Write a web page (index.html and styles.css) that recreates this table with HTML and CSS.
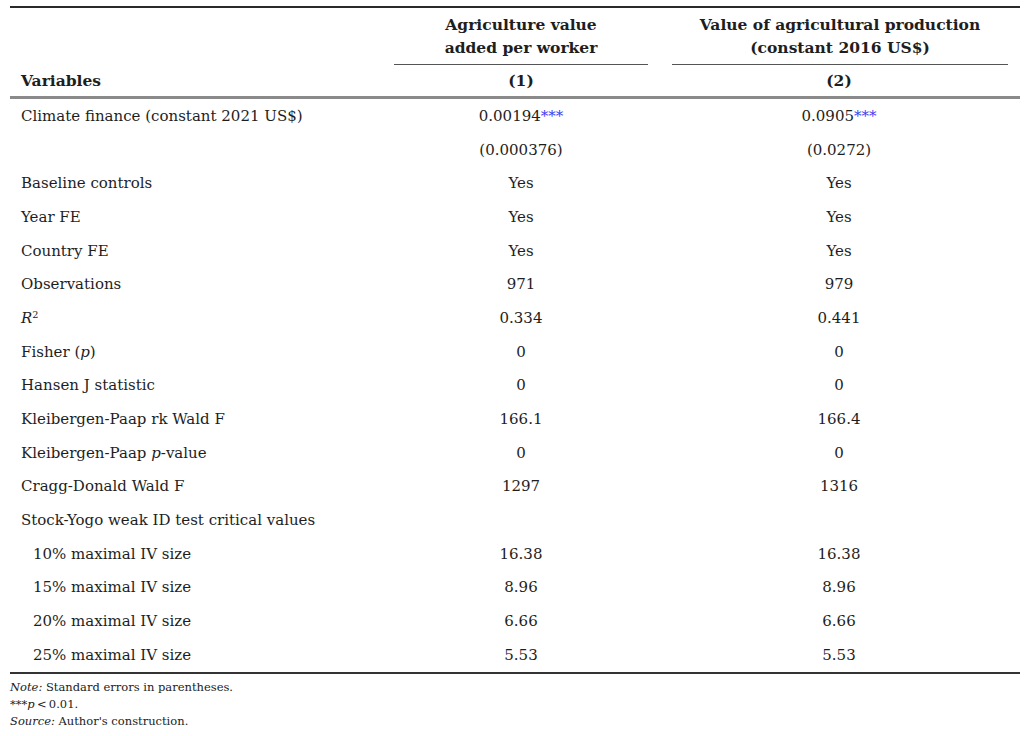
FILE: index.html
```html
<!DOCTYPE html>
<html>
<head>
<meta charset="utf-8">
<link rel="stylesheet" href="styles.css">
</head>
<body>
<div class="page">
<table class="reg">
  <colgroup><col class="c0"><col class="c1"><col class="c2"></colgroup>
  <thead>
    <tr class="h1">
      <th></th>
      <th><div class="hd hd1">Agriculture value<br>added per worker</div></th>
      <th><div class="hd hd2">Value of agricultural production<br>(constant 2016 US$)</div></th>
    </tr>
    <tr class="h2">
      <th class="lab">Variables</th>
      <th>(1)</th>
      <th>(2)</th>
    </tr>
  </thead>
  <tbody>
    <tr><td class="lab">Climate finance (constant 2021 US$)</td><td>0.00194<span class="st">***</span></td><td>0.0905<span class="st">***</span></td></tr>
    <tr><td class="lab"></td><td>(0.000376)</td><td>(0.0272)</td></tr>
    <tr><td class="lab">Baseline controls</td><td>Yes</td><td>Yes</td></tr>
    <tr><td class="lab">Year FE</td><td>Yes</td><td>Yes</td></tr>
    <tr><td class="lab">Country FE</td><td>Yes</td><td>Yes</td></tr>
    <tr><td class="lab">Observations</td><td>971</td><td>979</td></tr>
    <tr><td class="lab"><i>R</i><sup>2</sup></td><td>0.334</td><td>0.441</td></tr>
    <tr><td class="lab">Fisher (<i>p</i>)</td><td>0</td><td>0</td></tr>
    <tr><td class="lab">Hansen J statistic</td><td>0</td><td>0</td></tr>
    <tr><td class="lab">Kleibergen-Paap rk Wald F</td><td>166.1</td><td>166.4</td></tr>
    <tr><td class="lab">Kleibergen-Paap <i>p</i>-value</td><td>0</td><td>0</td></tr>
    <tr><td class="lab">Cragg-Donald Wald F</td><td>1297</td><td>1316</td></tr>
    <tr><td class="lab">Stock-Yogo weak ID test critical values</td><td></td><td></td></tr>
    <tr><td class="lab ind">10% maximal IV size</td><td>16.38</td><td>16.38</td></tr>
    <tr><td class="lab ind">15% maximal IV size</td><td>8.96</td><td>8.96</td></tr>
    <tr><td class="lab ind">20% maximal IV size</td><td>6.66</td><td>6.66</td></tr>
    <tr class="last"><td class="lab ind">25% maximal IV size</td><td>5.53</td><td>5.53</td></tr>
  </tbody>
</table>
<div class="notes">
  <p><i>Note:</i> Standard errors in parentheses.</p>
  <p>***<i>p</i>&thinsp;&lt;&thinsp;0.01.</p>
  <p><i>Source:</i> Author's construction.</p>
</div>
</div>
</body>
</html>
```
FILE: styles.css
```css
html, body {
  margin: 0;
  padding: 0;
  background: #ffffff;
}
.page {
  padding: 6px 6px 0 10px;
  font-family: "DejaVu Serif", "Liberation Serif", serif;
  color: #1e1e1e;
}
.reg {
  border-collapse: collapse;
  width: 1010px;
  table-layout: fixed;
  font-size: 15px;
}
.c0 { width: 374px; }
.c1 { width: 274px; }
.c2 { width: 362px; }
.reg thead tr.h1 th {
  border-top: 2px solid #2a2a2a;
  padding: 5px 0 0 0;
  vertical-align: bottom;
}
.reg th {
  font-weight: bold;
  text-align: center;
  padding: 0;
}
.reg th .hd, .reg tr.h2 th { font-size: 15.5px; }
.hd {
  line-height: 23px;
  padding-bottom: 5px;
  border-bottom: 1.5px solid #555;
}
.hd1 { margin: 0 10px; }
.hd2 { margin: 0 12px 0 14px; }
.reg tr.h2 th {
  height: 31px;
  border-bottom: 3px solid #8a8a8a;
  vertical-align: middle;
}
.reg th.lab, .reg td.lab {
  text-align: left;
  padding-left: 11px;
}
.reg td {
  text-align: center;
  height: 33.7px;
  padding: 0;
  vertical-align: middle;
}
.reg td.ind { padding-left: 23px; }
.reg tr.last td { border-bottom: 2px solid #333; }
.st { color: #3d3df2; }
sup { font-size: 0.65em; vertical-align: 0.5em; line-height: 0; }
.notes {
  font-size: 11.5px;
  line-height: 17px;
  padding-top: 5px;
  color: #222;
}
.notes p { margin: 0; }
```
